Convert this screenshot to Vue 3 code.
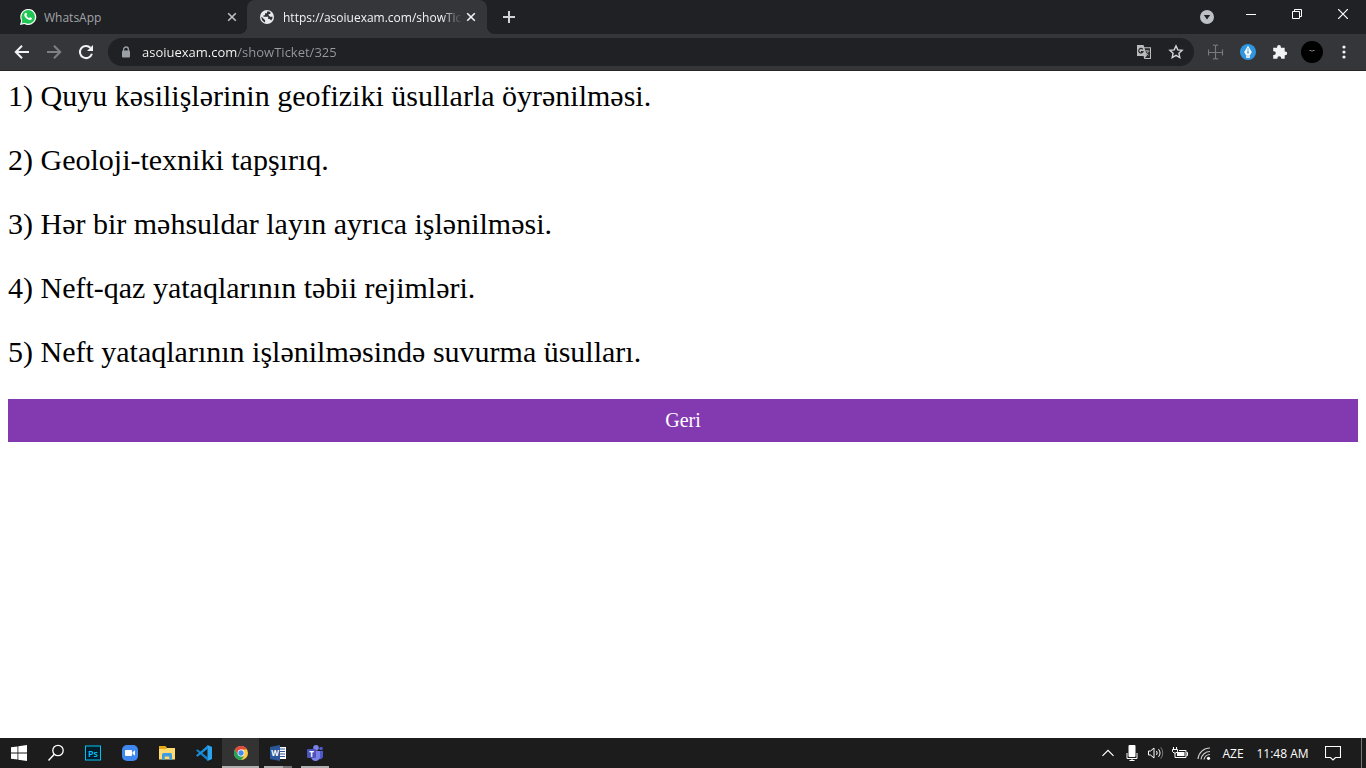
<script setup>
import { ref } from 'vue'

const address = ref('asoiuexam.com/showTicket/325')
const questions = [
  'Quyu kəsilişlərinin geofiziki üsullarla öyrənilməsi.',
  'Geoloji-texniki tapşırıq.',
  'Hər bir məhsuldar layın ayrıca işlənilməsi.',
  'Neft-qaz yataqlarının təbii rejimləri.',
  'Neft yataqlarının işlənilməsində suvurma üsulları.'
]
</script>

<template>
  <div class="screen">
    <header class="browser">
      <div class="tabstrip">
        <div class="tab">
          <svg class="favicon" width="18" height="18" viewBox="0 0 18 18" aria-hidden="true">
            <path d="M1 17l1.2-4.3A8 8 0 1 1 5.300 15.900z" fill="#fff" />
            <circle cx="9.200" cy="8.900" r="6.800" fill="#1fc552" />
            <path d="M2.600 15.500l1-3.700 2.700 2.700z" fill="#1fc552" />
            <path d="M6.300 4.900c.5-.4 1-.3 1.200.2l.5 1.200c.1.400-.2.700-.6 1.200.5 1.200 1.500 2.100 2.700 2.600.5-.4.800-.9 1.200-.8l1.400.7c.4.300.2 1.100-.3 1.600-1 .9-2.500.6-4.200-.5C6.300 9.800 5.300 8.500 5.300 7c0-.9.500-1.700 1-2.100z" fill="#fff" />
          </svg>
          <span class="tab-title">WhatsApp</span>
          <button class="tab-close" aria-label="Close WhatsApp tab">
            <svg width="10" height="10" viewBox="0 0 10 10"><path d="M1.200 1.200l7.600 7.600M8.800 1.200l-7.600 7.600" stroke="#bdc1c6" stroke-width="1.600" /></svg>
          </button>
        </div>
        <div class="tab active">
          <svg class="favicon" width="16" height="16" viewBox="0 0 16 16" aria-hidden="true">
            <circle cx="8" cy="8" r="7" fill="#e8eaed" />
            <path d="M2.400 7.600l3.700 3.600v2.200c-2.500-.6-3.900-2.900-3.700-5.800zM8.300 2.200L7.900 4.300H6v2H4.500v1.400h4.700v2.200h1.600l1.300 1.500c1-.9 1.500-2.100 1.500-3.600h-2.500L9.600 6.300V5h1.800V3.200c-.9-.7-1.900-1-3.100-1z" fill="#303135" />
          </svg>
          <span class="tab-title">https://asoiuexam.com/showTicket/325</span>
          <button class="tab-close" aria-label="Close current tab">
            <svg width="10" height="10" viewBox="0 0 10 10"><path d="M1.200 1.200l7.600 7.600M8.800 1.200l-7.600 7.600" stroke="#f1f3f4" stroke-width="1.600" /></svg>
          </button>
        </div>
        <button class="new-tab" aria-label="New tab">
          <svg width="12" height="12" viewBox="0 0 12 12"><path d="M6 0v12M0 6h12" stroke="#d2d3d5" stroke-width="2" /></svg>
        </button>
        <div class="window-controls">
          <button class="tab-search" aria-label="Search tabs">
            <svg width="14" height="14" viewBox="0 0 14 14"><circle cx="7" cy="7" r="7" fill="#bdc1c6" /><path d="M3.800 5h6.400L7 9.600z" fill="#202124" /></svg>
          </button>
          <button class="window-button" aria-label="Minimize">
            <svg width="10" height="10" viewBox="0 0 10 10"><path d="M0 5.500h10" stroke="#fff" /></svg>
          </button>
          <button class="window-button" aria-label="Restore">
            <svg width="10" height="10" viewBox="0 0 10 10"><path d="M.5 2.500h7v7h-7zM2.500 2.500v-2h7v7h-2" fill="none" stroke="#fff" /></svg>
          </button>
          <button class="window-button" aria-label="Close window">
            <svg width="10" height="10" viewBox="0 0 10 10"><path d="M0 0l10 10M10 0L0 10" stroke="#fff" stroke-width="1.200" /></svg>
          </button>
        </div>
      </div>

      <div class="toolbar">
        <button class="tool" aria-label="Back">
          <svg width="16" height="16" viewBox="0 0 16 16"><path d="M15 8H2.200M8 1.800L1.800 8 8 14.200" fill="none" stroke="#f1f3f4" stroke-width="2" /></svg>
        </button>
        <button class="tool" aria-label="Forward">
          <svg width="16" height="16" viewBox="0 0 16 16"><path d="M1 8h12.800M8 1.800L14.200 8 8 14.200" fill="none" stroke="#7e8083" stroke-width="2" /></svg>
        </button>
        <button class="tool" aria-label="Reload">
          <svg width="16" height="16" viewBox="0 0 16 16"><path d="M13.900 9.800A6.100 6.100 0 1 1 12.400 3.700" fill="none" stroke="#f1f3f4" stroke-width="2" /><path d="M15 1v6H9z" fill="#f1f3f4" /></svg>
        </button>
        <div class="omnibox">
          <svg class="lock" width="10" height="12" viewBox="0 0 10 12" aria-hidden="true"><path d="M2.600 5V3.400a2.400 2.400 0 0 1 4.800 0V5" fill="none" stroke="#9aa0a6" stroke-width="1.300" /><rect x="1" y="4.500" width="8" height="7" rx="1" fill="#9aa0a6" /></svg>
          <input v-model="address" class="address" type="text" aria-label="Address" spellcheck="false" />
          <button class="tool" aria-label="Translate">
            <svg width="16" height="16" viewBox="0 0 16 16">
              <path d="M1 1h6.500l.8 2.300H15V15H8.300L7.500 12H1z" fill="#babcbe" />
              <path d="M8.500 4.300H14V14H9l2-2.500z" fill="#292a2d" />
              <path d="M6.700 5.300a2.200 2.200 0 1 0 .2 2.400H5" fill="none" stroke="#292a2d" stroke-width="1.200" />
              <path d="M9 7h4.600M11 6v1M12.400 7c-.3 1.700-1.700 3-3 3.600M9.800 8.300c.5 1.500 1.600 2.500 2.800 3" fill="none" stroke="#a6a8aa" />
            </svg>
          </button>
          <button class="tool" aria-label="Bookmark this page">
            <svg width="16" height="16" viewBox="0 0 16 16"><path d="M8 1.900l1.800 4 4.300.4-3.200 2.900.9 4.300L8 11.300l-3.800 2.200.9-4.300-3.200-2.900 4.300-.4z" fill="none" stroke="#d3d5d8" stroke-width="1.400" /></svg>
          </button>
        </div>
        <button class="tool" aria-label="Crosshair extension">
          <svg width="16" height="16" viewBox="0 0 16 16"><path d="M7.500 1v14M.5 8.500h14M5 .8l2.500.7L10 .8M5 15.200l2.500-.7 2.500.7M.5 5.500v6M14.500 5.500v6" fill="none" stroke="#77797b" stroke-width="1.200" /></svg>
        </button>
        <button class="tool" aria-label="Pen extension">
          <svg width="16" height="16" viewBox="0 0 16 16"><circle cx="8" cy="8" r="8" fill="#3196dd" /><path d="M8 1.800l3.800 6.200-2 3.700H6.200L4.200 8zM6 12.200h4v1.500H6z" fill="#fff" /><path d="M8 4v4" stroke="#3196dd" stroke-width=".7" /><circle cx="8" cy="8.500" r=".9" fill="#3196dd" /></svg>
        </button>
        <button class="tool" aria-label="Extensions">
          <svg width="16" height="16" viewBox="0 0 16 16"><path d="M1.200 3.700h3.900V3a1.900 1.900 0 0 1 3.800 0v.7h3.800v3.700h.6a1.900 1.900 0 0 1 0 3.800h-.6v3.600H9.200v-.7a1.900 1.900 0 0 0-3.800 0v.7H1.200V11h.7a1.900 1.900 0 0 0 0-3.800h-.7z" fill="#f1f3f4" /></svg>
        </button>
        <button class="tool" aria-label="Profile">
          <svg width="22" height="22" viewBox="0 0 22 22"><circle cx="11" cy="11" r="11" fill="#000" /><path d="M8.500 9.500h2M11.500 9.500h2" stroke="#888" stroke-width="1" /><path d="M10 10.500h2" stroke="#333" /></svg>
        </button>
        <button class="tool" aria-label="Menu">
          <svg width="4" height="14" viewBox="0 0 4 14"><circle cx="2" cy="2" r="1.600" fill="#f1f3f4" /><circle cx="2" cy="7" r="1.600" fill="#f1f3f4" /><circle cx="2" cy="12" r="1.600" fill="#f1f3f4" /></svg>
        </button>
      </div>
    </header>

    <main class="page">
      <p v-for="(question, index) in questions" :key="index" class="question">{{ index + 1 }}) {{ question }}</p>
      <button class="back">Geri</button>
    </main>

    <footer class="taskbar">
      <button class="app" aria-label="Start">
        <svg width="16" height="16" viewBox="0 0 16 16"><path d="M0 2.300L6.500 1.400v6.100H0zM7.300 1.300L16 0v7.500H7.300zM0 8.400h6.500v6.200L0 13.700zM7.300 8.400H16V16l-8.700-1.300z" fill="#fff" /></svg>
      </button>
      <button class="app" aria-label="Search">
        <svg width="18" height="18" viewBox="0 0 18 18"><circle cx="11" cy="6.500" r="5.200" fill="none" stroke="#fff" stroke-width="1.300" /><path d="M7.300 10.300L1.500 16.500" stroke="#fff" stroke-width="1.500" /></svg>
      </button>
      <button class="app" aria-label="Photoshop">
        <svg width="16" height="16" viewBox="0 0 16 16"><rect x=".5" y="1" width="15" height="14" fill="#001d2b" stroke="#00c3f5" /><text x="8" y="11.500" text-anchor="middle" font-family="Open Sans, sans-serif" font-size="9" font-weight="600" fill="#00c8ff">Ps</text></svg>
      </button>
      <button class="app" aria-label="Zoom">
        <svg width="16" height="16" viewBox="0 0 16 16"><rect width="16" height="16" rx="5" fill="#4087f0" /><rect x="3" y="5" width="7" height="6" rx="1" fill="#fff" /><path d="M10.500 7.200L13 5.300v5.400l-2.500-1.900z" fill="#fff" /></svg>
      </button>
      <button class="app" aria-label="File Explorer">
        <svg width="16" height="16" viewBox="0 0 16 16"><path d="M0 1h6.500l1.500 2H16v3H0z" fill="#e6a718" /><path d="M0 4h7l1-1h8v11.500H0z" fill="#ffdb70" /><path d="M3 15V9.500a1.500 1.500 0 0 1 1.500-1.500h7A1.500 1.500 0 0 1 13 9.500V15h-2.700v-3.500H5.700V15z" fill="#3f9ce0" /></svg>
      </button>
      <button class="app" aria-label="Visual Studio Code">
        <svg width="16" height="16" viewBox="0 0 16 16"><path d="M11.500 0L16 2v12l-4.500 2z" fill="#2aa5ed" /><path d="M0 5.500l1.500-1.300L12 12.500V16z" fill="#1283cc" /><path d="M0 10.500l1.500 1.300L12 3.500V0z" fill="#1a91dc" /></svg>
      </button>
      <button class="app current" aria-label="Chrome">
        <svg width="14" height="14" viewBox="0 0 14 14"><circle cx="7" cy="7" r="7" fill="#fdca43" /><path d="M.9 3.500A7 7 0 0 1 13.100 3.500H7L4 8.800z" fill="#df4c3f" /><path d="M.9 3.500L4 8.800l3 1.700h3L7 14A7 7 0 0 1 .9 3.500z" fill="#23a35a" /><circle cx="7" cy="7" r="3.400" fill="#fff" /><circle cx="7" cy="7" r="2.700" fill="#4688f1" /></svg>
      </button>
      <button class="app running grouped" aria-label="Word">
        <svg width="16" height="16" viewBox="0 0 16 16"><path d="M8 2h8v12H8z" fill="#fff" /><path d="M9 4h6M9 6.500h6M9 9h6M9 11.500h6" stroke="#2b579a" /><path d="M0 2l10-2v16L0 14z" fill="#2b579a" /><text x="5" y="11" text-anchor="middle" font-family="Open Sans, sans-serif" font-size="8" font-weight="700" fill="#fff">W</text></svg>
      </button>
      <button class="app running" aria-label="Teams">
        <svg width="16" height="16" viewBox="0 0 16 16"><circle cx="9" cy="2.800" r="2.800" fill="#7b83eb" /><circle cx="14" cy="3.500" r="1.800" fill="#5059c9" /><path d="M10 6h6v5a3 3 0 0 1-4 3z" fill="#5059c9" /><path d="M4 6h9v5.500a4.500 4.500 0 0 1-9 0z" fill="#7b83eb" /><rect y="4" width="9" height="9" rx="1" fill="#4b53bc" /><text x="4.500" y="11.500" text-anchor="middle" font-family="Open Sans, sans-serif" font-size="8" font-weight="700" fill="#fff">T</text></svg>
      </button>
      <div class="tray">
        <button class="tray-item" aria-label="Show hidden icons">
          <svg width="12" height="8" viewBox="0 0 12 8"><path d="M.5 6.800L6 1.300l5.500 5.500" fill="none" stroke="#fff" stroke-width="1.200" /></svg>
        </button>
        <button class="tray-item" aria-label="Microphone">
          <svg width="12" height="16" viewBox="0 0 12 16"><rect x="2.500" width="7" height="12" rx="1" fill="#fff" /><path d="M1 8v5.500h10V8M6 13v2M3.500 15.500h5" fill="none" stroke="#fff" /></svg>
        </button>
        <button class="tray-item" aria-label="Volume">
          <svg width="16" height="14" viewBox="0 0 16 14"><path d="M.5 5h2L6 2v10L2.500 9h-2zM8.500 5a3.500 3.500 0 0 1 0 4M10.500 3.200a6 6 0 0 1 0 7.600" fill="none" stroke="#fff" /><path d="M12.700 1.300a9 9 0 0 1 0 11.400" fill="none" stroke="#777" /></svg>
        </button>
        <button class="tray-item" aria-label="Battery">
          <svg width="16" height="14" viewBox="0 0 16 14"><path d="M1.500 1v2M4.500 1v2M.5 3.500h5v2L4 7H2L.5 5.500zM3 7v4.500h11v-7H7M14.500 6.500h1v3h-1" fill="none" stroke="#fff" /><path d="M5 6h7.500v4H5z" fill="#fff" /></svg>
        </button>
        <button class="tray-item" aria-label="Network">
          <svg width="14" height="14" viewBox="0 0 14 14"><path d="M1 13A12 12 0 0 1 13 2M4 13.300A9 9 0 0 1 13 5.500M7 13.500a6 6 0 0 1 6-5" fill="none" stroke="#c8c8c8" stroke-width="1.200" /><circle cx="11.500" cy="12.300" r="1.600" fill="#fff" /></svg>
        </button>
        <button class="language" aria-label="Input language">AZE</button>
        <button class="clock">11:48 AM</button>
        <button class="notifications" aria-label="Notifications">
          <svg width="16" height="16" viewBox="0 0 16 16"><path d="M.5 1.500h15v11h-5L8 15l-2.500-2.500h-5z" fill="none" stroke="#fff" stroke-width="1.100" /></svg>
        </button>
        <button class="show-desktop" aria-label="Show desktop"></button>
      </div>
    </footer>
  </div>
</template>

<style>
body {
  margin: 0;
  background: #fff;
}
</style>

<style scoped>
.screen {
  display: flex;
  flex-direction: column;
  min-height: 100vh;
  font-family: "Open Sans", "Noto Sans", sans-serif;
  font-size: 12px;
}
button {
  display: flex;
  align-items: center;
  justify-content: center;
  flex: none;
  margin: 0;
  padding: 0;
  border: 0;
  background: none;
  color: inherit;
  font: inherit;
}
svg {
  display: block;
  flex: none;
}
.tabstrip {
  display: flex;
  height: 34px;
  padding-left: 7px;
  background: #202124;
}
.tab {
  display: flex;
  align-items: center;
  flex: 0 1 240px;
  box-sizing: border-box;
  min-width: 0;
  padding: 0 6px 0 12px;
  color: #a0a4a9;
}
.favicon {
  margin-right: 7px;
}
.tab-title {
  flex: 1;
  min-width: 0;
  overflow: hidden;
  white-space: nowrap;
}
.tab-close {
  width: 18px;
  height: 18px;
}
.active {
  position: relative;
  padding-right: 7px;
  border-radius: 8px 8px 0 0;
  background: #35363a;
  color: #f1f3f4;
}
.active::before,
.active::after {
  content: "";
  position: absolute;
  bottom: 0;
  width: 8px;
  height: 8px;
}
.active::before {
  right: 100%;
  background: radial-gradient(circle at 0 0, #202124 8px, #35363a 8px);
}
.active::after {
  left: 100%;
  background: radial-gradient(circle at 100% 0, #202124 8px, #35363a 8px);
}
.active .favicon {
  margin-right: 8px;
}
.active .tab-title {
  -webkit-mask-image: linear-gradient(90deg, #000 calc(100% - 20px), transparent);
  mask-image: linear-gradient(90deg, #000 calc(100% - 20px), transparent);
}
.new-tab {
  width: 28px;
  margin-left: 8px;
}
.window-controls {
  display: flex;
  margin-left: auto;
}
.tab-search {
  width: 28px;
  margin-right: 7px;
}
.window-button {
  width: 46px;
  height: 28px;
}
.toolbar {
  display: flex;
  align-items: center;
  height: 36px;
  padding: 0 6px;
  border-bottom: 1px solid #292325;
  background: #35363a;
}
.tool {
  width: 32px;
  height: 28px;
}
.omnibox {
  display: flex;
  align-items: center;
  flex: 1;
  height: 28px;
  margin: 0 6px;
  padding: 0 2px 0 13px;
  border-radius: 14px;
  background: #202124;
}
.address {
  flex: 1;
  min-width: 0;
  margin: 0 0 0 11px;
  padding: 0;
  border: 0;
  outline: 0;
  background: linear-gradient(90deg, #fff 95px, #969a9e 95px);
  -webkit-background-clip: text;
  background-clip: text;
  color: transparent;
  font: 13px/20px "Open Sans", "Noto Sans", sans-serif;
}
.page {
  flex: 1;
  padding: 8px;
  color: #000;
  font-family: "Liberation Serif", "Times New Roman", serif;
}
.question {
  margin: 0 0 30px;
  font-size: 30px;
  line-height: 34px;
}
.back {
  width: 100%;
  padding: 10px;
  background: #833ab0;
  color: #fff;
  font-size: 20px;
  line-height: 23px;
}
.taskbar {
  display: flex;
  height: 30px;
  background: #1c1c1c;
  color: #fff;
}
.app {
  position: relative;
  width: 37px;
}
.current {
  background: #333;
}
.current::after,
.running::after {
  content: "";
  position: absolute;
  right: 4px;
  bottom: 0;
  left: 5px;
  height: 2px;
  background: #b0b0b0;
}
.current::after {
  right: 0;
  left: 0;
}
.grouped::after {
  background: linear-gradient(90deg, #b0b0b0 19px, #777 19px);
}
.tray {
  display: flex;
  margin-left: auto;
}
.tray-item {
  width: 24px;
}
.language {
  width: 34px;
}
.clock {
  width: 65px;
}
.notifications {
  width: 36px;
}
.show-desktop {
  width: 5px;
  margin-left: 10px;
  border-left: 1px solid #777;
}
</style>
